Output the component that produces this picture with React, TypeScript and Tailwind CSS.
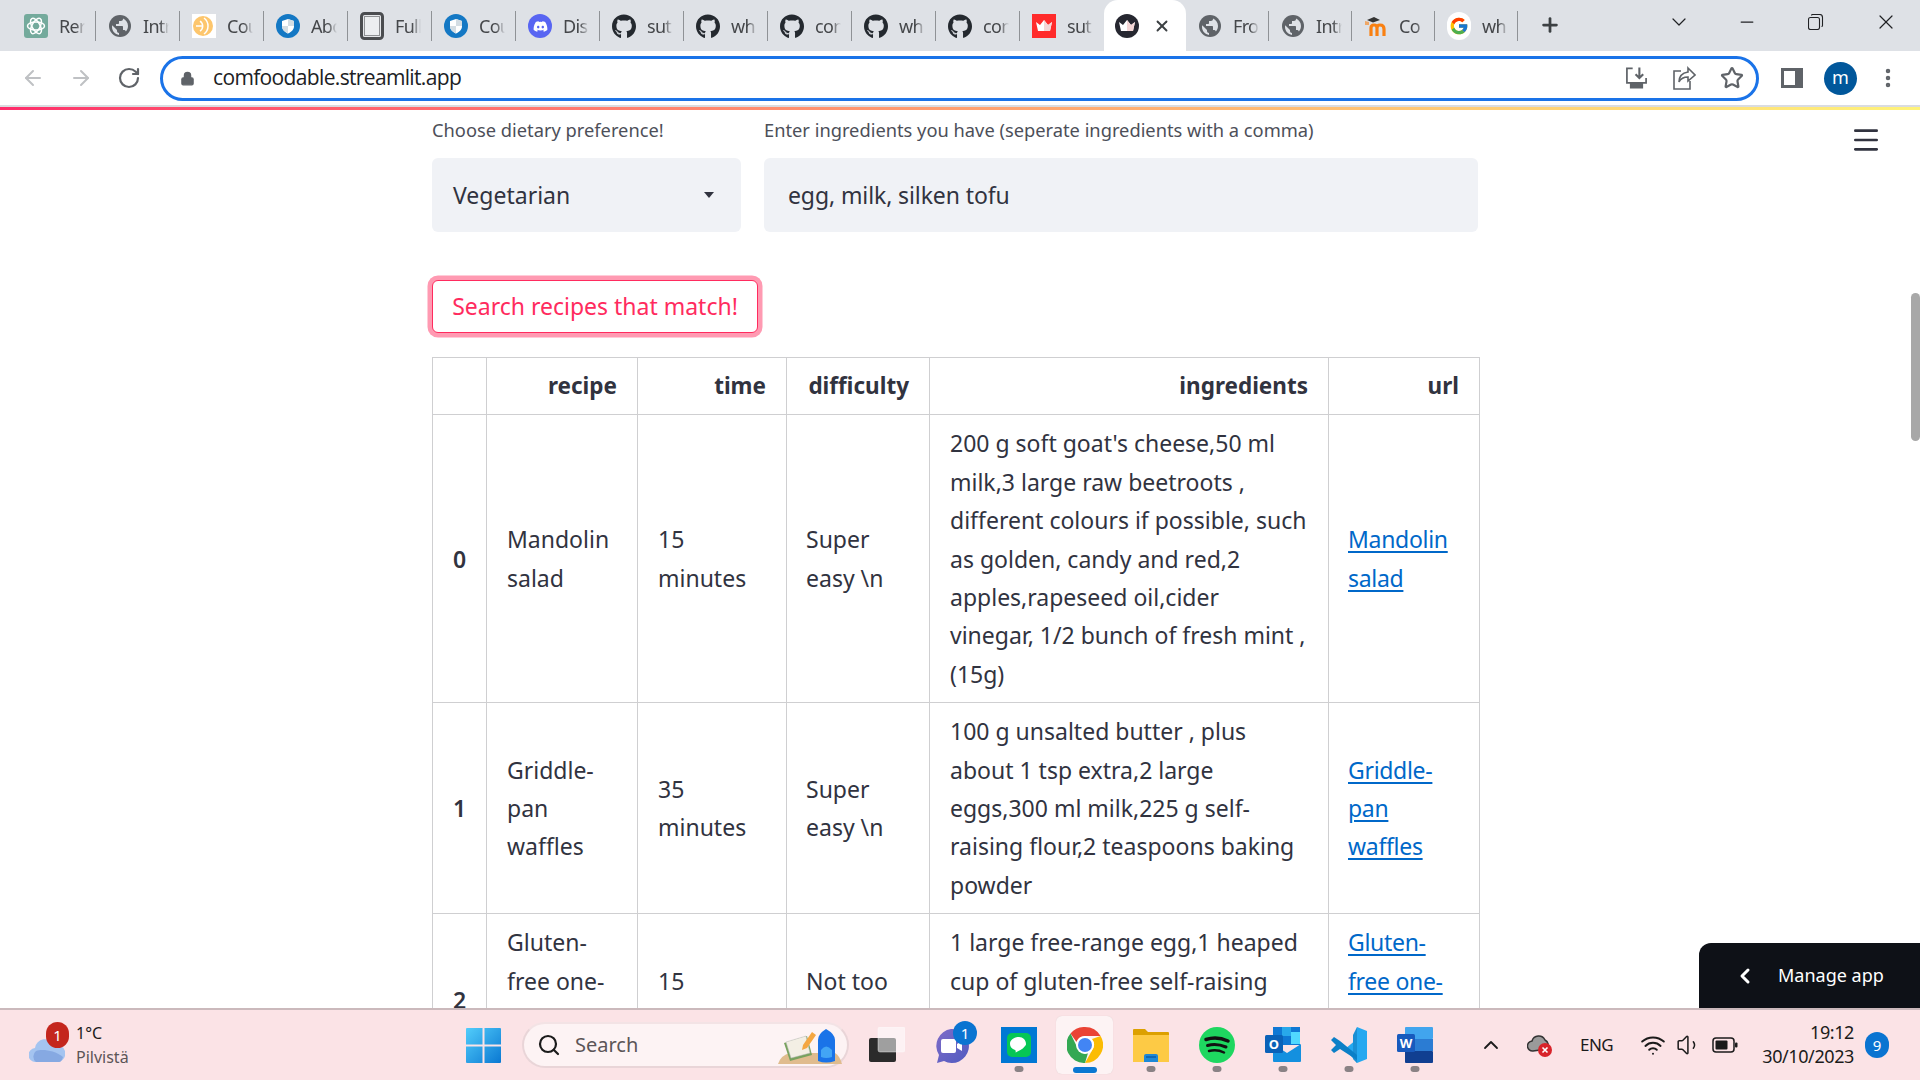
import React from "react";
import { FaGithub, FaDiscord } from "react-icons/fa";
import { FcGoogle } from "react-icons/fc";
import { ArrowLeft, ArrowRight, RotateCw, Lock, Star, Search, ChevronUp, ChevronDown, ChevronLeft, X, Minus, Plus, Menu, Wifi, Volume1, EllipsisVertical } from "lucide-react";

const Globe = () => (
  <svg viewBox="0 0 24 24" className="w-[24px] h-[24px]" fill="#5f6368">
    <circle cx="12" cy="12" r="11" fill="#5f6368" />
    <path fill="#dee1e6" d="M11 20.9c-3.9-.5-7-3.9-7-7.9 0-.6.1-1.2.2-1.8L9 16v1c0 1.1.9 2 2 2v1.9zM17.9 17.4c-.3-.8-1-1.4-1.9-1.4h-1v-3c0-.6-.4-1-1-1H8v-2h2c.6 0 1-.4 1-1V7h2c1.100 0 2-.9 2-2v-.4c2.900 1.200 5 4.100 5 7.400 0 2.100-.8 4-2.100 5.400z" />
  </svg>
);
const Gpt = () => (
  <svg viewBox="0 0 24 24" className="w-[24px] h-[24px]">
    <rect width="24" height="24" rx="3" fill="#74aa9c" />
    <g fill="none" stroke="#fff" strokeWidth="1.5">
      <ellipse cx="12" cy="12" rx="8.500" ry="4" />
      <ellipse cx="12" cy="12" rx="8.500" ry="4" transform="rotate(60 12 12)" />
      <ellipse cx="12" cy="12" rx="8.500" ry="4" transform="rotate(120 12 12)" />
    </g>
  </svg>
);
const Orange = () => (
  <svg viewBox="0 0 24 24" className="w-[24px] h-[24px]">
    <rect width="24" height="24" fill="#fff" />
    <circle cx="11" cy="12" r="10" fill="#fdc66d" />
    <g fill="none" stroke="#fff" strokeWidth="1.500">
      <path d="M8 7a6 6 0 0 1 0 10" />
      <path d="M12 4a10 10 0 0 1 0 16" />
      <path d="M4 12h6" />
    </g>
  </svg>
);
const Shield = () => (
  <svg viewBox="0 0 24 24" className="w-[24px] h-[24px]">
    <circle cx="12" cy="12" r="12" fill="#1478c4" />
    <path d="M12 5l6 2v5c0 4-3 6-6 7.500-3-1.500-6-3.500-6-7.500V7z" fill="#fff" />
    <path d="M12 5l6 2v5h-6zM12 12H6c0 4 3 6 6 7.500z" fill="#d4dde3" />
  </svg>
);
const Full = () => (
  <svg viewBox="0 0 24 28" className="w-[24px] h-[28px]">
    <rect x="1.500" y="1.500" width="21" height="25" rx="3" fill="#e5e7ea" stroke="#4b4d50" strokeWidth="3" />
    <rect x="4.500" y="4.500" width="15" height="19" fill="#eceef0" stroke="#8f9194" />
  </svg>
);
const Crown = ({ x = 4 }: { x?: number }) => (
  <g transform={`translate(${x} 6)`}>
    <path d="M0 2l4 3 4-5 4 5 4-3-2 9H2z" fill="#fff" />
    <path d="M8 0l4 5 4-3-2 9H8z" fill="#f4d6d6" />
  </g>
);
const RedCrown = () => (
  <svg viewBox="0 0 24 24" className="w-[24px] h-[24px]">
    <rect width="24" height="24" fill="#ff2b2b" />
    <Crown />
  </svg>
);
const DarkCrown = () => (
  <svg viewBox="0 0 24 24" className="w-[24px] h-[24px]">
    <circle cx="12" cy="12" r="12" fill="#262730" />
    <Crown />
  </svg>
);
const Github = () => <FaGithub className="w-[25px] h-[27px] text-[#24292f]" />;
const Discord = () => (
  <span className="w-[24px] h-[24px] rounded-full bg-[#5865f2] flex items-center justify-center">
    <FaDiscord className="w-[15px] h-[15px] text-white" />
  </span>
);
const Moodle = () => (
  <svg viewBox="0 0 24 24" className="w-[24px] h-[24px]">
    <path d="M7 22v-8q0-3 3-3 3 0 3 3v8M13 14q0-3 3-3 4 0 4 4v7" fill="none" stroke="#f98012" strokeWidth="3.200" />
    <path d="M3 6l7-3 6 3-7 2.500z" fill="#333" />
    <path d="M1 11V7l4 1v3z" fill="#f98012" opacity=".6" />
  </svg>
);
const G = () => (
  <span className="w-[24px] h-[28px] rounded-full bg-white flex items-center justify-center">
    <FcGoogle className="w-[20px] h-[20px]" />
  </span>
);

type T = { i: React.ReactNode; t: string };
const tabsA: T[] = [
  { i: <Gpt />, t: "Rer" },
  { i: <Globe />, t: "Intr" },
  { i: <Orange />, t: "Cou" },
  { i: <Shield />, t: "Abo" },
  { i: <Full />, t: "Full" },
  { i: <Shield />, t: "Cou" },
  { i: <Discord />, t: "Dis" },
  { i: <Github />, t: "sut" },
  { i: <Github />, t: "wh" },
  { i: <Github />, t: "con" },
  { i: <Github />, t: "wh" },
  { i: <Github />, t: "con" },
];
const tabsB: T[] = [
  { i: <Globe />, t: "Fro" },
  { i: <Globe />, t: "Intr" },
  { i: <Moodle />, t: "Co" },
  { i: <G />, t: "wh" },
];

function Tab({ i, t, sep = true, cls }: T & { sep?: boolean; cls: string }) {
  return (
    <div className={`${cls} h-[51px] shrink-0 flex items-center pl-3 pt-px`}>
      <div className="w-[24px] flex justify-center shrink-0">{i}</div>
      <div className="ml-[11px] w-[26px] overflow-hidden whitespace-nowrap text-[18px] tracking-[-0.7px] text-[#45474a] [mask-image:linear-gradient(to_right,black_65%,transparent)]">{t}</div>
      {sep && <div className="ml-auto w-[1.5px] h-[30px] bg-[#8f9296]" />}
    </div>
  );
}

function TabStrip() {
  return (
    <div className="h-[51px] bg-[#dee1e6] flex pl-3 shrink-0">
      {tabsA.map((x, k) => <Tab key={k} {...x} cls="w-[84px]" />)}
      <Tab i={<RedCrown />} t="sut" sep={false} cls="w-[84px]" />
      <div className="w-[82px] h-[51px] shrink-0 bg-white rounded-t-[14px] flex items-center pl-[11px] pt-px">
        <DarkCrown />
        <X className="ml-[14px] w-[18px] h-[18px] text-[#3c4043]" strokeWidth={2.5} />
      </div>
      {tabsB.map((x, k) => <Tab key={k} {...x} cls="w-[83px]" />)}
      <Plus className="ml-[21px] mt-[14px] w-[22px] h-[22px] text-[#3c4043]" strokeWidth={3} />
      <div className="ml-auto flex h-[44px] items-center text-[#202124]">
        <div className="w-[68px] flex justify-center"><ChevronDown className="w-[24px] h-[24px]" strokeWidth={1.200} /></div>
        <div className="w-[68px] flex justify-center"><Minus className="w-[20px] h-[20px]" strokeWidth={1.500} /></div>
        <div className="w-[70px] flex justify-center">
          <svg viewBox="0 0 16 16" className="w-[16px] h-[16px]" fill="none" stroke="#202124" strokeWidth="1.100"><rect x="0.500" y="3.500" width="11" height="12" rx="2" /><path d="M3.500 1.500q0-1 1-1h7q3 0 3 3v8q0 1-1 1" /></svg>
        </div>
        <div className="w-[69px] flex justify-center"><X className="w-[24px] h-[24px]" strokeWidth={1.200} /></div>
      </div>
    </div>
  );
}

function Toolbar() {
  return (
    <div className="h-[54px] bg-white flex items-center shrink-0">
      <ArrowLeft className="ml-[21px] w-[24px] h-[24px] text-[#bfc1c4]" strokeWidth={2} />
      <ArrowRight className="ml-[24px] w-[24px] h-[24px] text-[#bfc1c4]" strokeWidth={2} />
      <RotateCw className="ml-[24px] w-[24px] h-[24px] text-[#5f6368]" strokeWidth={2.200} />
      <div className="ml-[19px] w-[1599px] h-[45px] rounded-full border-[3px] border-[#1a73e8] flex items-center pl-[17px] pr-[12px]">
        <Lock className="w-[15px] h-[17px] text-[#5f6368] fill-[#5f6368]" strokeWidth={2} />
        <span className="ml-[18px] text-[21px] text-[#202124] font-['Open_Sans'] tracking-[-0.65px]">comfoodable.streamlit.app</span>
        <div className="ml-auto flex items-center gap-[24px]">
          <svg viewBox="0 0 24 24" className="w-[23px] h-[24px]" fill="none" stroke="#5f6368" strokeWidth="1.800">
            <path d="M8 2H2v15h20V12" />
            <path d="M15 1v11M11 8l4 4 4-4" strokeWidth="2.200" />
            <path d="M6 17h12v5H6z" fill="#5f6368" />
          </svg>
          <svg viewBox="0 0 24 24" className="w-[24px] h-[24px]" fill="none" stroke="#5f6368" strokeWidth="1.600">
            <path d="M9 5H2v18h16v-8" />
            <path d="M16 2l7 7-7 6v-4c-4 0-7 1-9 5 0-6 3-9 9-10z" />
          </svg>
          <Star className="w-[24px] h-[24px] text-[#5f6368]" strokeWidth={2.200} />
        </div>
      </div>
      <div className="ml-[22px] w-[22px] h-[20px] border-[#5f6368] border-y-[3px] border-l-[3px] border-r-[8px]" />
      <div className="ml-[21px] w-[33px] h-[33px] rounded-full bg-[#01579b] text-white flex items-center justify-center text-[18px] pb-[2px]">m</div>
      <EllipsisVertical className="ml-[19px] w-[24px] h-[24px] text-[#5f6368]" strokeWidth={2.500} />
    </div>
  );
}

const cell = "border border-[#cfcfd1] px-5 py-[9px] align-middle";
const Link = ({ children }: { children: React.ReactNode }) => <a className="text-[#0068c9] underline underline-offset-[3px] tracking-[-0.3px]">{children}</a>;
const rows = [
  {
    n: "0", r: ["Mandolin", "salad"], t: ["15", "minutes"], d: ["Super", "easy \\n"],
    g: ["200 g soft goat's cheese,50 ml", "milk,3 large raw beetroots ,", "different colours if possible, such", "as golden, candy and red,2", "apples,rapeseed oil,cider", "vinegar, 1/2 bunch of fresh mint ,", "(15g)"],
  },
  {
    n: "1", r: ["Griddle-", "pan", "waffles"], t: ["35", "minutes"], d: ["Super", "easy \\n"],
    g: ["100 g unsalted butter , plus", "about 1 tsp extra,2 large", "eggs,300 ml milk,225 g self-", "raising flour,2 teaspoons baking", "powder"],
  },
  {
    n: "2", r: ["Gluten-", "free one-", "egg", "pancakes"], t: ["15", "minutes"], d: ["Not too", "tricky \\n"],
    g: ["1 large free-range egg,1 heaped", "cup of gluten-free self-raising", "flour,1 cup of milk,", "olive oil"],
  },
];
const Lines = ({ l }: { l: string[] }) => <>{l.map((x, i) => <div key={i}>{x}</div>)}</>;

function RecipeTable() {
  return (
    <table className="mt-[24px] w-[1047px] table-fixed border-collapse whitespace-nowrap">
      <colgroup>
        <col className="w-[54px]" /><col className="w-[151px]" /><col className="w-[149px]" /><col className="w-[143px]" /><col className="w-[399px]" /><col className="w-[151px]" />
      </colgroup>
      <thead>
        <tr className="font-semibold text-right text-[22.5px]">
          <th className={cell} />
          <th className={cell}>recipe</th>
          <th className={cell}>time</th>
          <th className={cell}>difficulty</th>
          <th className={cell}>ingredients</th>
          <th className={cell}>url</th>
        </tr>
      </thead>
      <tbody>
        {rows.map((x) => (
          <tr key={x.n}>
            <th className={`${cell} font-semibold text-center !px-0`}>{x.n}</th>
            <td className={cell}><Lines l={x.r} /></td>
            <td className={cell}><Lines l={x.t} /></td>
            <td className={`${cell} !pl-[19px]`}><Lines l={x.d} /></td>
            <td className={cell}><Lines l={x.g} /></td>
            <td className={`${cell} !pl-[19px]`}>{x.r.map((y, i) => <div key={i}><Link>{y}</Link></div>)}</td>
          </tr>
        ))}
      </tbody>
    </table>
  );
}

function Main() {
  return (
    <div className="relative flex-1 min-h-0 overflow-hidden bg-white text-[#31333f] text-[23px] leading-[38.4px] font-['Noto_Sans',sans-serif]">
      <div className="ml-[432px] w-[1047px] pt-[5px]">
        <div className="flex gap-[23px]">
          <div className="w-[309px]">
            <div className="h-[30px] text-[18.3px] leading-[30px] text-[#4d4f59] whitespace-nowrap">Choose dietary preference!</div>
            <div className="mt-[13px] h-[74px] rounded-[6px] bg-[#f0f2f6] flex items-center pl-[21px] pr-[27px]">
              <span>Vegetarian</span>
              <span className="ml-auto w-0 h-0 border-x-[5.5px] border-x-transparent border-t-[6px] border-t-[#31333f]" />
            </div>
          </div>
          <div className="w-[714px]">
            <div className="h-[30px] text-[18.3px] leading-[30px] text-[#4d4f59] whitespace-nowrap">Enter ingredients you have (seperate ingredients with a comma)</div>
            <div className="mt-[13px] h-[74px] rounded-[6px] bg-[#f0f2f6] flex items-center pl-[24px] tracking-[-0.1px]">egg, milk, silken tofu</div>
          </div>
        </div>
        <button className="mt-[48px] h-[53px] w-[326px] block rounded-[6px] border-[1.5px] border-[#ff2b5e] ring-[4.5px] ring-[#ff9ab2] bg-white text-[#ff2b5e] whitespace-nowrap">Search recipes that match!</button>
        <RecipeTable />
      </div>
      <Menu className="absolute left-[1850px] top-[14px] w-[32px] h-[32px] text-[#31333f]" strokeWidth={2} />
      <div className="absolute right-0 top-[183px] w-[9px] h-[148px] rounded-full bg-[#a8a8a8]" />
      <div className="absolute right-0 bottom-0 w-[221px] h-[65px] rounded-tl-[12px] bg-[#0e1117] flex items-center pl-[34px] text-white text-[18px]">
        <ChevronLeft className="w-[24px] h-[24px]" strokeWidth={3} />
        <span className="ml-[21px] whitespace-nowrap">Manage app</span>
      </div>
    </div>
  );
}

const Dot = () => <span className="absolute left-1/2 -translate-x-1/2 top-[39px] w-[9px] h-[6px] rounded-full bg-[#8a8285]" />;
const App36 = ({ cls, dot, children }: { cls: string; dot?: boolean; children: React.ReactNode }) => (
  <div className={`${cls} relative w-[36px] h-[36px] shrink-0`}>{children}{dot && <Dot />}</div>
);

function Taskbar() {
  return (
    <div className="h-[72px] shrink-0 border-t-[2px] border-[#cbb9bc] bg-[#fbe3e6] flex items-center text-[#1b1b1b] font-['Noto_Sans',sans-serif]">
      <div className="w-[466px] shrink-0 flex items-center pl-[29px]">
        <div className="relative w-[36px] h-[26px] mt-[8px]">
          <svg viewBox="0 0 36 26" className="w-[36px] h-[26px]"><path d="M7 26a7 7 0 0 1-1-14 10 10 0 0 1 19-3 8 8 0 0 1 5 17z" fill="#a4c4f0" /><path d="M7 26a7 7 0 0 1 0-11c6-2 18-1 27 6-1 3-2 5-4 5z" fill="#86a9e2" /></svg>
          <span className="absolute -top-[14px] left-[17px] w-[23px] h-[26px] rounded-full bg-[#c4261d] text-white text-[15px] flex items-center justify-center">1</span>
        </div>
        <div className="ml-[11px] text-[16px] leading-[24px]">
          <div>1°C</div>
          <div className="text-[#5b5557]">Pilvistä</div>
        </div>
      </div>
      <svg viewBox="0 0 35 35" className="w-[35px] h-[35px] shrink-0">
        <defs>
          <linearGradient id="w1" x1="0" y1="0" x2="1" y2="1"><stop offset="0" stopColor="#52cdfb" /><stop offset="1" stopColor="#0a78d2" /></linearGradient>
        </defs>
        <path fill="url(#w1)" d="M0 1a1 1 0 0 1 1-1h15.500v16.500H0zM18.500 0H34a1 1 0 0 1 1 1v15.500H18.500zM0 18.500h16.500V35H1a1 1 0 0 1-1-1zM18.500 18.500H35V34a1 1 0 0 1-1 1H18.500z" />
      </svg>
      <div className="ml-[21px] w-[327px] h-[46px] rounded-full bg-[#fdf3f4] border-[2px] border-[#e9d5d8] border-t-[#f3e3e5] flex items-center pl-[13px] shrink-0 relative">
        <Search className="w-[24px] h-[24px] text-[#1b1b1b]" strokeWidth={2.200} />
        <span className="ml-[14px] text-[20px] text-[#5b5557]">Search</span>
        <svg viewBox="0 0 67 38" className="absolute right-[5px] top-[3px] w-[67px] h-[38px]">
          <path d="M3 37q3-9 12-11h45q5 3 7 11z" fill="#e0bc8e" />
          <path d="M9 16l23-7 5 19-22 6z" fill="#78a25e" />
          <path d="M11 15l20-6 4 17-19 5z" fill="#f3efe4" stroke="#bbb" strokeWidth=".5" />
          <path d="M28 18l9-13 4 3-9 13-5 2z" fill="#f4a742" />
          <path d="M43 34V13q0-6 8-11 9 5 9 11v21q-9 3-17 0z" fill="#1a73e8" />
          <path d="M46 30v-7q5-7 11 0v7q-6 2-11 0z" fill="#42a5f5" />
        </svg>
      </div>
      <svg viewBox="0 0 36 36" className="ml-[20px] w-[36px] h-[36px] shrink-0">
        <rect x="0" y="11" width="27" height="24" rx="2" fill="#2b2b2b" />
        <rect x="9" y="0" width="27" height="25" rx="2" fill="#fff" fillOpacity=".55" stroke="#fff" strokeOpacity=".4" />
      </svg>
      <App36 cls="ml-[28px]">
        <svg viewBox="0 0 36 36" className="w-[36px] h-[36px]">
          <defs><linearGradient id="t1" x1="0" y1="0" x2="1" y2="1"><stop offset="0" stopColor="#7f6bc8" /><stop offset="1" stopColor="#4f5bc0" /></linearGradient></defs>
          <path d="M18 2a17 17 0 1 1-7 32l-7 2 2-8A17 17 0 0 1 18 2z" fill="url(#t1)" />
          <rect x="8" y="12" width="15" height="14" rx="2" fill="#fff" />
          <path d="M24 17l5-3v10l-5-3z" fill="#fff" />
        </svg>
        <span className="absolute -top-[6px] left-[20px] w-[24px] h-[24px] rounded-full bg-[#0a74d1] text-white text-[15px] flex items-center justify-center">1</span>
      </App36>
      <App36 cls="ml-[32px]" dot>
        <div className="w-[36px] h-[36px] bg-[#0078d4] flex items-center justify-center">
          <svg viewBox="0 0 24 24" className="w-[24px] h-[24px]">
            <rect width="24" height="24" rx="5" fill="#06c755" />
            <path d="M12 4c-5 0-9 3-9 7 0 3 2 5 5 6 1 .3.600 1.500.600 2.500 2-1 7-3 9-6 1-1 1.400-1.500 1.400-2.500 0-4-3-7-7-7z" fill="#fff" />
          </svg>
        </div>
      </App36>
      <div className="ml-[19px] w-[57px] h-[58px] rounded-[6px] bg-[#fdf3f4] shadow-[0_0_1px_#d9c8ca] shrink-0 relative flex items-center justify-center">
        <svg viewBox="0 0 36 36" className="w-[36px] h-[36px]">
          <path d="M18 0a18 18 0 0 1 15.600 9H18a9 9 0 0 0-8.500 6L3.500 6.500A18 18 0 0 1 18 0z" fill="#ea4335" />
          <path d="M33.600 9A18 18 0 0 1 18 36l7.500-13.500A9 9 0 0 0 25 12z" fill="#fbbc04" />
          <path d="M18 36A18 18 0 0 1 3.500 6.500L11 22a9 9 0 0 0 10 4z" fill="#34a853" />
          <circle cx="18" cy="18" r="9" fill="#fff" />
          <circle cx="18" cy="18" r="7" fill="#4285f4" />
        </svg>
        <span className="absolute left-1/2 -translate-x-1/2 bottom-[1px] w-[24px] h-[6px] rounded-full bg-[#0a78d2]" />
      </div>
      <App36 cls="ml-[20px]" dot>
        <svg viewBox="0 0 36 36" className="w-[36px] h-[36px]">
          <path d="M0 3q0-1 1-1h11l3 3h20q1 0 1 1v7H0z" fill="#dca000" />
          <path d="M0 8h36v27H0z" fill="#fdca45" />
          <path d="M11 35v-6q0-2 2-2h10q2 0 2 2v6z" fill="#1e88d6" />
          <path d="M13 30h10" stroke="#0b5ea8" strokeWidth="1.500" />
        </svg>
      </App36>
      <App36 cls="ml-[30px]" dot>
        <svg viewBox="0 0 36 36" className="w-[36px] h-[36px]">
          <circle cx="18" cy="18" r="18" fill="#1ed760" />
          <g fill="none" stroke="#111" strokeLinecap="round">
            <path d="M7 12.500q11-3.500 22 1.500" strokeWidth="3.500" />
            <path d="M8.500 18.500q9-2.500 18.500 1.500" strokeWidth="3" />
            <path d="M10 24q8-2 15 1.500" strokeWidth="2.500" />
          </g>
        </svg>
      </App36>
      <App36 cls="ml-[30px]" dot>
        <svg viewBox="0 0 36 36" className="w-[36px] h-[36px]">
          <rect x="8" y="0" width="27" height="18" fill="#0f78d4" />
          <rect x="17" y="0" width="9" height="9" fill="#28a8ea" />
          <rect x="26" y="5" width="9" height="12" fill="#50d9ff" />
          <path d="M8 17l14 9 14-9v17q0 1-1 1H9q-1 0-1-1z" fill="#1490df" />
          <rect x="0" y="8" width="18" height="18" rx="1.500" fill="#0a62b8" />
          <text x="9" y="22" fontSize="13" fontWeight="700" textAnchor="middle" fill="#fff">O</text>
        </svg>
      </App36>
      <App36 cls="ml-[30px]" dot>
        <svg viewBox="0 0 36 36" className="w-[36px] h-[36px]">
          <path d="M26 0l10 4v28l-10 4-12-14 12-10z" fill="#24a8f0" />
          <path d="M26 0v36l-4-4V8z" fill="#1a8fd4" />
          <path d="M26 8L9 22l-6 4-3-3 5-5-5-5 3-3 6 4 11 9 6 5v5L9 22" fill="#0b7fc7" />
        </svg>
      </App36>
      <App36 cls="ml-[30px]" dot>
        <svg viewBox="0 0 36 36" className="w-[36px] h-[36px]">
          <rect x="8" y="0" width="28" height="12" rx="1" fill="#41a5ee" />
          <rect x="8" y="12" width="28" height="12" fill="#2b7cd3" />
          <rect x="8" y="24" width="28" height="12" rx="1" fill="#103f91" />
          <rect x="0" y="7" width="18" height="18" rx="1.500" fill="#185abd" />
          <text x="9" y="21" fontSize="13" fontWeight="700" textAnchor="middle" fill="#fff">W</text>
        </svg>
      </App36>
      <ChevronUp className="ml-[46px] w-[24px] h-[24px] text-[#1b1b1b] shrink-0" strokeWidth={1.800} />
      <svg viewBox="0 0 26 24" className="ml-[24px] w-[26px] h-[24px] shrink-0">
        <path d="M6 18a5 5 0 0 1-1-10 7 7 0 0 1 13-1 6 6 0 0 1 2 9z" fill="#9a9a9a" stroke="#333" strokeWidth="1.500" />
        <circle cx="18" cy="17" r="7" fill="#d8232a" />
        <path d="M15.500 14.500l5 5m0-5l-5 5" stroke="#fff" strokeWidth="1.600" />
      </svg>
      <span className="ml-[27px] text-[17px] w-[35px] shrink-0 whitespace-nowrap tracking-[-0.5px]">ENG</span>
      <Wifi className="ml-[25px] w-[26px] h-[26px] shrink-0" strokeWidth={1.800} />
      <Volume1 className="ml-[10px] w-[26px] h-[26px] shrink-0" strokeWidth={1.400} />
      <svg viewBox="0 0 26 16" className="ml-[10px] w-[26px] h-[16px] shrink-0" fill="none">
        <rect x="1" y="1" width="21" height="14" rx="3" stroke="#1b1b1b" strokeWidth="1.500" />
        <rect x="3.500" y="3.500" width="12" height="9" rx="1" fill="#1b1b1b" />
        <rect x="23" y="5.500" width="2.500" height="5" rx="1" fill="#1b1b1b" />
      </svg>
      <div className="ml-[5px] w-[111px] text-right text-[18px] leading-[24px] shrink-0 whitespace-nowrap tracking-[-0.4px] -mt-[2px]">
        <div>19:12</div>
        <div>30/10/2023</div>
      </div>
      <span className="ml-[11px] w-[24px] h-[26px] rounded-full bg-[#0a74d1] text-white text-[15px] flex items-center justify-center shrink-0">9</span>
    </div>
  );
}

export default function App() {
  return (
    <div className="w-[1920px] h-[1080px] overflow-hidden flex flex-col bg-white font-['Noto_Sans',sans-serif]">
      <TabStrip />
      <Toolbar />
      <div className="h-[2px] bg-[#dadce0] shrink-0" />
      <div className="h-[3px] shrink-0 bg-gradient-to-r from-[#ff2b6b] via-[#ffa070] to-[#fff37a]" />
      <Main />
      <Taskbar />
    </div>
  );
}
